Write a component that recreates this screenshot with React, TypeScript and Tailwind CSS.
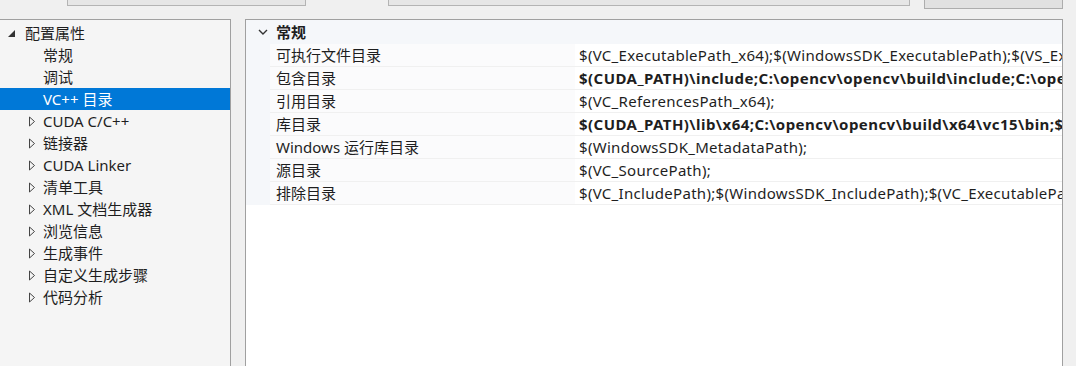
import { ReactNode } from 'react';

const font = "font-['Noto_Sans','Noto_Sans_CJK_SC',sans-serif]";

type TreeItem = { label: string; level: 0 | 1; kind: 'open' | 'closed' | 'leaf'; selected?: boolean };

const tree: TreeItem[] = [
  { label: '配置属性', level: 0, kind: 'open' },
  { label: '常规', level: 1, kind: 'leaf' },
  { label: '调试', level: 1, kind: 'leaf' },
  { label: 'VC++ 目录', level: 1, kind: 'leaf', selected: true },
  { label: 'CUDA C/C++', level: 1, kind: 'closed' },
  { label: '链接器', level: 1, kind: 'closed' },
  { label: 'CUDA Linker', level: 1, kind: 'closed' },
  { label: '清单工具', level: 1, kind: 'closed' },
  { label: 'XML 文档生成器', level: 1, kind: 'closed' },
  { label: '浏览信息', level: 1, kind: 'closed' },
  { label: '生成事件', level: 1, kind: 'closed' },
  { label: '自定义生成步骤', level: 1, kind: 'closed' },
  { label: '代码分析', level: 1, kind: 'closed' },
];

// 值列在面板右边缘被截断，和原图一样
const props: { name: string; value: string; bold?: boolean }[] = [
  { name: '可执行文件目录', value: '$(VC_ExecutablePath_x64);$(WindowsSDK_ExecutablePath);$(VS_Ex' },
  { name: '包含目录', value: '$(CUDA_PATH)\\include;C:\\opencv\\opencv\\build\\include;C:\\oper', bold: true },
  { name: '引用目录', value: '$(VC_ReferencesPath_x64);' },
  { name: '库目录', value: '$(CUDA_PATH)\\lib\\x64;C:\\opencv\\opencv\\build\\x64\\vc15\\bin;$', bold: true },
  { name: 'Windows 运行库目录', value: '$(WindowsSDK_MetadataPath);' },
  { name: '源目录', value: '$(VC_SourcePath);' },
  { name: '排除目录', value: '$(VC_IncludePath);$(WindowsSDK_IncludePath);$(VC_ExecutablePa' },
];

function Arrow({ kind }: { kind: TreeItem['kind'] }): ReactNode {
  if (kind === 'open') {
    return (
      <svg width="9" height="9" viewBox="0 0 9 9">
        <path d="M8 1 L8 8 L1 8 Z" fill="#333" />
      </svg>
    );
  }
  if (kind === 'closed') {
    return (
      <svg width="8" height="11" viewBox="0 0 8 11">
        <path d="M1.5 1 L6.5 5.5 L1.5 10 Z" fill="none" stroke="#444" strokeWidth="1" />
      </svg>
    );
  }
  return null;
}

export default function App() {
  return (
    <div className={`w-[1076px] h-[366px] bg-[#f0f0f0] flex flex-col overflow-hidden ${font}`}>
      {/* 顶部被截断的控件 */}
      <div className="h-[19px] flex items-start shrink-0">
        <div className="ml-[67px] w-[239px] h-[6px] bg-[#e6e6e6] border border-t-0 border-[#b4b4b4]" />
        <div className="ml-[82px] w-[522px] h-[6px] bg-[#e6e6e6] border border-t-0 border-[#b4b4b4]" />
        <div className="ml-[14px] w-[139px] h-[9px] bg-[#e1e1e1] border border-t-0 border-[#adadad]" />
      </div>

      <div className="flex flex-1 min-h-0">
        {/* 左侧树 */}
        <div className="w-[231px] bg-[#f5f5f5] border-t border-r border-[#a0a0a0] pt-[2px] text-[15px] text-[#1e1e1e] shrink-0">
          {tree.map((item) => (
            <div
              key={item.label}
              className={`h-[22px] flex items-center ${item.selected ? 'bg-[#0078d7] text-white' : ''}`}
            >
              <div className={`${item.level === 0 ? 'w-[25px] pl-[7px]' : 'w-[43px] pl-[28px]'} flex items-center shrink-0`}>
                <Arrow kind={item.kind} />
              </div>
              <span className="whitespace-nowrap leading-none">{item.label}</span>
            </div>
          ))}
        </div>

        {/* 右侧属性表 */}
        <div className="ml-[14px] w-[818px] bg-white border-t border-l border-r border-[#a0a0a0] text-[15px] text-[#1e1e1e] overflow-hidden shrink-0">
          <div className="h-[24px] flex items-center bg-[#f5f7fa]">
            <div className="w-[30px] flex justify-center pl-[4px]">
              <svg width="10" height="7" viewBox="0 0 10 7">
                <path d="M1 1 L5 5 L9 1" fill="none" stroke="#333" strokeWidth="1.4" />
              </svg>
            </div>
            <span className="font-bold">常规</span>
          </div>
          {props.map((p) => (
            <div key={p.name} className="h-[23px] flex">
              <div className="w-[24px] bg-[#f5f7fa] shrink-0" />
              <div className="w-[305px] pl-[6px] flex items-center border-b border-[#f0f0f0] bg-[#fbfbfc] shrink-0 whitespace-nowrap">
                {p.name}
              </div>
              <div
                className={`flex-1 min-w-0 pl-[4px] flex items-center border-b border-[#f0f0f0] whitespace-nowrap overflow-hidden ${p.bold ? 'font-bold tracking-[0.45px]' : 'tracking-[0.3px]'}`}
              >
                {p.value}
              </div>
            </div>
          ))}
        </div>
      </div>
    </div>
  );
}
